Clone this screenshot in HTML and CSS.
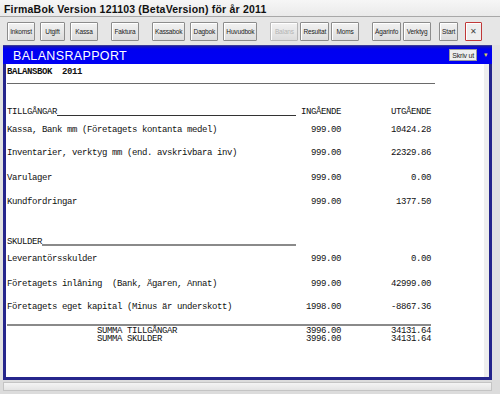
FILE: index.html
```html
<!DOCTYPE html>
<html lang="sv">
<head>
    <meta charset="UTF-8">
    <title>FirmaBok - Balansrapport</title>
    <link rel="stylesheet" href="styles.css">
</head>
<body>
    <div class="window">
        <div class="titlebar">FirmaBok Version 121103 (BetaVersion) för år 2011</div>

        <div class="toolbar">
            <div class="group">
                <button class="btn">Inkomst</button>
                <button class="btn btn-narrow">Utgift</button>
                <button class="btn">Kassa</button>
            </div>
            <div class="group">
                <button class="btn">Faktura</button>
            </div>
            <div class="group">
                <button class="btn">Kassabok</button>
                <button class="btn">Dagbok</button>
                <button class="btn">Huvudbok</button>
            </div>
            <div class="group tight">
                <button class="btn" disabled>Balans</button>
                <button class="btn">Resultat</button>
                <button class="btn">Moms</button>
            </div>
            <div class="group tight">
                <button class="btn">Ägarinfo</button>
                <button class="btn">Verktyg</button>
            </div>
            <div class="group group-end">
                <button class="btn btn-small">Start</button>
                <button class="btn btn-close">&#x2715;</button>
            </div>
        </div>

        <div class="frame">
            <div class="caption">
                <span class="caption-title">BALANSRAPPORT</span>
                <button class="print-btn">Skriv ut</button>
                <span class="caption-arrow">&#x25BE;</span>
            </div>

            <div class="panel">
                <div class="report">
                    <div class="doc-title">BALANSBOK  2011</div>
                    <div class="rule rule-top"></div>

                    <div class="row heading sp-24">
                        <span class="heading-label">TILLGÅNGAR</span>
                        <span class="num">INGÅENDE</span>
                        <span class="num">UTGÅENDE</span>
                    </div>
                    <div class="row sp-10">
                        <span>Kassa, Bank mm (Företagets kontanta medel)</span>
                        <span class="num">999.00</span>
                        <span class="num">10424.28</span>
                    </div>
                    <div class="row sp-15">
                        <span>Inventarier, verktyg mm (end. avskrivbara inv)</span>
                        <span class="num">999.00</span>
                        <span class="num">22329.86</span>
                    </div>
                    <div class="row sp-17">
                        <span>Varulager</span>
                        <span class="num">999.00</span>
                        <span class="num">0.00</span>
                    </div>
                    <div class="row sp-16">
                        <span>Kundfordringar</span>
                        <span class="num">999.00</span>
                        <span class="num">1377.50</span>
                    </div>

                    <div class="row heading heading-soft sp-32">
                        <span class="heading-label">SKULDER</span>
                        <span></span>
                        <span></span>
                    </div>
                    <div class="row sp-9">
                        <span>Leverantörsskulder</span>
                        <span class="num">999.00</span>
                        <span class="num">0.00</span>
                    </div>
                    <div class="row sp-17">
                        <span>Företagets inlåning  (Bank, Ägaren, Annat)</span>
                        <span class="num">999.00</span>
                        <span class="num">42999.00</span>
                    </div>
                    <div class="row sp-15">
                        <span>Företagets eget kapital (Minus är underskott)</span>
                        <span class="num">1998.00</span>
                        <span class="num">-8867.36</span>
                    </div>

                    <div class="rule rule-sum"></div>
                    <div class="row sum sp-1">
                        <span>SUMMA TILLGÅNGAR</span>
                        <span class="num">3996.00</span>
                        <span class="num">34131.64</span>
                    </div>
                    <div class="row sum">
                        <span>SUMMA SKULDER</span>
                        <span class="num">3996.00</span>
                        <span class="num">34131.64</span>
                    </div>
                </div>
            </div>
        </div>

        <div class="statusbar">
            <div class="status-track"></div>
        </div>
    </div>
</body>
</html>
```

FILE: styles.css
```css
* {
    box-sizing: border-box;
}

body {
    margin: 0;
    background: #dedede;
    font-family: 'Liberation Sans', Arial, sans-serif;
}

.window {
    width: 500px;
    height: 394px;
    display: flex;
    flex-direction: column;
    background: #e2e2e2;
    overflow: hidden;
}

.titlebar {
    height: 17px;
    padding: 3px 0 0 4px;
    font-size: 10.5px;
    font-weight: bold;
    letter-spacing: 0.2px;
    color: #111;
    background: linear-gradient(#f6f6f6, #eaeaea);
    border-bottom: 1px solid #a8a8a8;
    white-space: nowrap;
}

.toolbar {
    height: 28px;
    display: flex;
    align-items: flex-start;
    padding: 5px 0 0 7px;
    gap: 13px;
    background: #e6e6e6;
}

.group {
    display: flex;
    gap: 5px;
}

.group.tight {
    gap: 2px;
}

.group-end {
    margin-left: -5px;
    gap: 7px;
}

.btn {
    height: 19px;
    min-width: 28px;
    padding: 0 2px;
    font-family: 'Liberation Sans', Arial, sans-serif;
    font-size: 6.5px;
    letter-spacing: -0.15px;
    color: #222;
    background: linear-gradient(#f2f2f2, #dcdcdc);
    border: 1px solid #8c8c8c;
    box-shadow: inset 1px 1px 0 #ffffff;
    border-radius: 1px;
}

.btn-narrow {
    min-width: 25px;
}

.btn-small {
    min-width: 19px;
}

.btn:disabled {
    color: #b4b4b4;
    border-color: #b8b8b8;
}

.btn-close {
    min-width: 17px;
    width: 17px;
    padding: 0;
    font-size: 8px;
    color: #444;
    border-color: #c03838;
    background: #eeeeee;
}

.frame {
    margin: 0 8px 0 3px;
    flex: 1;
    display: flex;
    flex-direction: column;
    border: 3px solid #26268c;
    border-top: none;
}

.caption {
    height: 19px;
    margin: 0 -3px;
    display: flex;
    align-items: center;
    padding: 0 0 0 10px;
    background: linear-gradient(#1a1aa8 0, #0000f0 3px, #0000f4 100%);
    border-top: 1px solid #3a3a9a;
}

.caption-title {
    flex: 1;
    color: #ffffff;
    font-size: 12.5px;
    letter-spacing: 0.35px;
    padding-top: 1px;
}

.print-btn {
    height: 12px;
    padding: 0 2px;
    font-family: 'Liberation Sans', Arial, sans-serif;
    font-size: 7px;
    letter-spacing: -0.2px;
    color: #222;
    background: #eeeeee;
    border: 1px solid #9a9a9a;
}

.caption-arrow {
    width: 12px;
    margin-left: 3px;
    color: #d8c860;
    font-size: 7px;
    text-align: center;
}

.panel {
    flex: 1;
    background: #ffffff;
    border-right: 5px solid #eeeeee;
}

.report {
    width: 429px;
    padding: 4px 0 0 1px;
    font-family: 'Liberation Mono', 'Courier New', monospace;
    font-size: 9px;
    letter-spacing: -0.4px;
    color: #111;
}

.doc-title {
    height: 8px;
    line-height: 8px;
    font-weight: bold;
    white-space: pre;
}

.rule {
    background: #6a6a6a;
}

.rule-top {
    height: 1px;
    margin-top: 7px;
    width: 428px;
}

.rule-sum {
    height: 2px;
    margin-top: 13px;
    width: 424px;
    background: #8a8a8a;
}

.row {
    display: grid;
    grid-template-columns: 289px 45px 90px;
    height: 8px;
    line-height: 8px;
    white-space: pre;
}

.num {
    text-align: right;
}

.heading-label {
    display: flex;
}

.heading-label::after {
    content: "";
    flex: 1;
    border-bottom: 1px solid #333;
}

.heading-soft .heading-label::after {
    border-bottom: 2px solid #8a8a8a;
}

.sum span:first-child {
    padding-left: 90px;
}

.sp-1 { margin-top: 1px; }
.sp-9 { margin-top: 9px; }
.sp-10 { margin-top: 10px; }
.sp-15 { margin-top: 15px; }
.sp-16 { margin-top: 16px; }
.sp-17 { margin-top: 17px; }
.sp-24 { margin-top: 24px; }
.sp-32 { margin-top: 32px; }

.statusbar {
    height: 14px;
    padding: 2px 8px 3px 3px;
    background: #dcdcdc;
}

.status-track {
    height: 100%;
    background: linear-gradient(#f4f4f4, #e4e4e4);
    border: 1px solid #c4c4c4;
}
```
